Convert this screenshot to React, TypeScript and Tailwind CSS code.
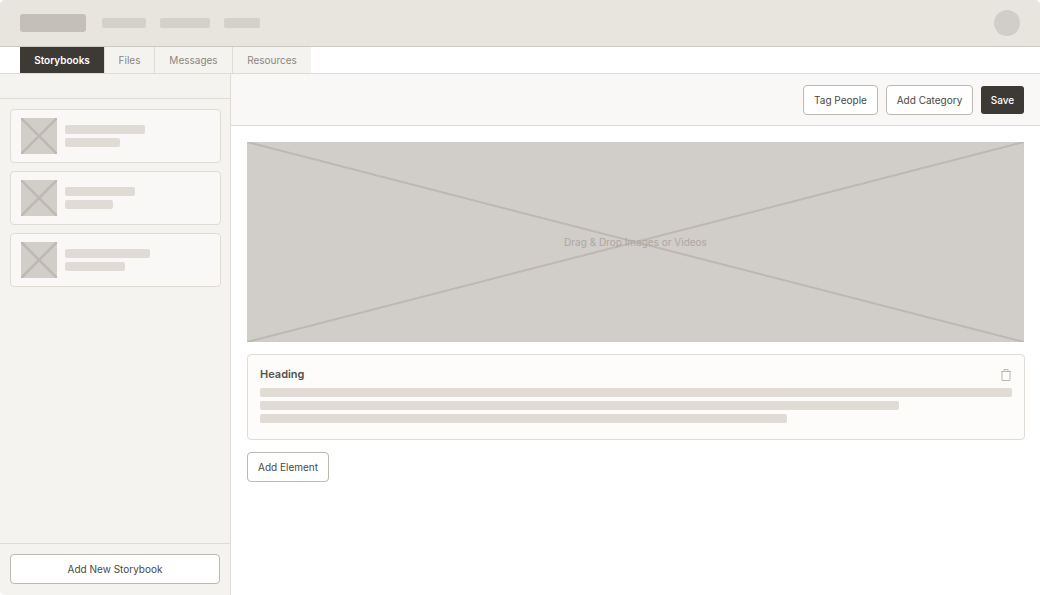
import React from "react";

function Placeholder({ className = "", line = 2 }: { className?: string; line?: number }) {
  return (
    <svg className={className} viewBox="0 0 100 100" preserveAspectRatio="none">
      <rect width="100" height="100" fill="#d1cdc8" />
      <line x1="0" y1="0" x2="100" y2="100" stroke="#bdb8b1" strokeWidth={line} vectorEffect="non-scaling-stroke" />
      <line x1="100" y1="0" x2="0" y2="100" stroke="#bdb8b1" strokeWidth={line} vectorEffect="non-scaling-stroke" />
    </svg>
  );
}

function StoryCard({ top, sub }: { top: string; sub: string }) {
  return (
    <div className="flex h-[54px] items-center gap-2 rounded-[4px] border border-[#e0dcd5] bg-[#faf8f6] pl-[10px]">
      <Placeholder className="h-9 w-9 shrink-0" line={2.5} />
      <div className="flex flex-col gap-1">
        <div className={`h-[9px] rounded-[2px] bg-[#e0dbd5] ${top}`} />
        <div className={`h-[9px] rounded-[2px] bg-[#e0dbd5] ${sub}`} />
      </div>
    </div>
  );
}

const tabs = [
  { label: "Files", className: "w-[50px]" },
  { label: "Messages", className: "w-[78px]" },
  { label: "Resources", className: "w-[79px]" },
];

export default function App() {
  return (
    <div className="flex h-[595px] w-[1040px] flex-col overflow-hidden rounded-[5px] bg-white font-['Inter',sans-serif] text-[10px] leading-none text-[#4a4742]">
      <header className="flex h-[47px] shrink-0 items-center border-b border-[#cdc9c2] bg-[#e8e4de] pl-5 pr-[20px]">
        <div className="h-[18px] w-[66px] rounded-[3px] bg-[#c4bfb8]" />
        <div className="ml-4 h-[10px] w-11 rounded-[2px] bg-[#d4d0ca]" />
        <div className="ml-[14px] h-[10px] w-[50px] rounded-[2px] bg-[#d4d0ca]" />
        <div className="ml-[14px] h-[10px] w-9 rounded-[2px] bg-[#d4d0ca]" />
        <div className="ml-auto h-[26px] w-[26px] rounded-full bg-[#d1cdc8]" />
      </header>

      <nav className="flex h-[27px] shrink-0 border-b border-[#e0dcd5] pl-5">
        <div className="flex w-[84px] items-center justify-center bg-[#3d3a35] font-semibold text-white">Storybooks</div>
        {tabs.map((tab) => (
          <div key={tab.label} className={`flex items-center justify-center border-l border-[#e0dcd5] bg-[#f5f3f0] text-[#8a8680] ${tab.className}`}>
            {tab.label}
          </div>
        ))}
      </nav>

      <div className="flex min-h-0 flex-1">
        <aside className="flex w-[231px] shrink-0 flex-col border-r border-[#e0dcd5] bg-[#f5f3f0]">
          <div className="h-[25px] shrink-0 border-b border-[#e0dcd5]" />
          <div className="flex flex-1 flex-col gap-2 pl-[10px] pr-[9px] pt-[10px]">
            <StoryCard top="w-20" sub="w-[55px]" />
            <StoryCard top="w-[70px]" sub="w-12" />
            <StoryCard top="w-[85px]" sub="w-[60px]" />
          </div>
          <div className="h-[52px] shrink-0 border-t border-[#e0dcd5] px-[10px] pt-[10px]">
            <button className="h-[30px] w-[210px] rounded-[4px] border border-[#bdb8b0] bg-white text-[#4a4742]">Add New Storybook</button>
          </div>
        </aside>

        <main className="flex min-w-0 flex-1 flex-col">
          <div className="flex h-[52px] shrink-0 items-center justify-end gap-2 border-b border-[#e0dcd5] bg-[#faf8f6] pr-4">
            <button className="h-[30px] w-[75px] rounded-[4px] border border-[#bdb8b0] bg-white">Tag People</button>
            <button className="h-[30px] w-[87px] rounded-[4px] border border-[#bdb8b0] bg-white">Add Category</button>
            <button className="h-7 w-[43px] rounded-[3px] bg-[#3d3a35] font-medium text-white">Save</button>
          </div>

          <div className="flex flex-col pl-4 pr-[15px] pt-4">
            <div className="relative mr-px h-[200px]">
              <Placeholder className="h-full w-full" />
              <span className="absolute inset-0 flex items-center justify-center text-[#aca8a2]">Drag &amp; Drop Images or Videos</span>
            </div>

            <section className="mt-3 h-[86px] rounded-[4px] border border-[#e0dcd5] bg-[#fdfcfa] px-3 pt-[14px]">
              <div className="flex h-[11px] items-center justify-between">
                <h2 className="text-[11px] font-semibold leading-none text-[#55524d]">Heading</h2>
                <svg width="10" height="12" viewBox="0 0 10 12" fill="none" stroke="#bdb8b0" strokeWidth="1" className="mr-px">
                  <path d="M0 2.5h10M1 2.5v9h8v-9M3 2.5V.5h4v2" />
                </svg>
              </div>
              <div className="mt-2 flex flex-col gap-1">
                <div className="h-[9px] w-full rounded-[2px] bg-[#e0dbd5]" />
                <div className="h-[9px] w-[639px] rounded-[2px] bg-[#e0dbd5]" />
                <div className="h-[9px] w-[527px] rounded-[2px] bg-[#e0dbd5]" />
              </div>
            </section>

            <button className="mt-3 h-[30px] w-[82px] rounded-[4px] border border-[#bdb8b0] bg-white">Add Element</button>
          </div>
        </main>
      </div>
    </div>
  );
}
